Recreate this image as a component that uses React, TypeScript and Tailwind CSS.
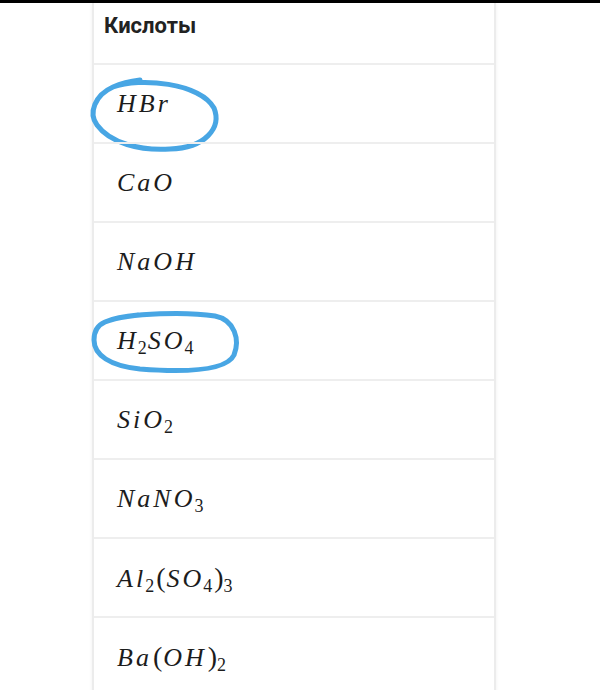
import React from "react";

// each formula: letters in math italic, digits as upright subscripts, parens upright
const formulas = ["HBr", "CaO", "NaOH", "H2SO4", "SiO2", "NaNO3", "Al2(SO4)3", "Ba(OH)2"];

// hand-drawn marks, coordinates local to the row's padding box
const marks: Record<number, string> = {
  0: "M19,22 C46,12 106,18 120,43 C128,63 111,83 76,84 C46,86 16,78 3,60 C-6,48 1,30 19,22 C28,18 38,16 46,15",
  3: "M11,20 C36,10 96,10 121,14 C141,18 146,38 140,53 C132,70 86,70 46,67 C16,64 0,53 0,38 C0,28 4,23 11,20 C20,16 32,14 44,13",
};

function Formula({ text }: { text: string }) {
  return (
    <span className="[font-family:'Liberation_Serif',serif] text-[#1c1c1c] text-[26px] leading-none">
      {text.split("").map((ch, i) => {
        if (/[0-9]/.test(ch)) {
          return (
            <span key={i} className="not-italic text-[18px] relative top-[5px] -ml-[1px] mr-[1px]">
              {ch}
            </span>
          );
        }
        if (ch === "(" || ch === ")") {
          return (
            <span key={i} className="not-italic text-[28px] mx-[1px]">
              {ch}
            </span>
          );
        }
        return (
          <span key={i} className="italic tracking-[3px]">
            {ch}
          </span>
        );
      })}
    </span>
  );
}

export default function App() {
  return (
    <div className="w-[600px] h-[690px] overflow-hidden bg-white">
      <div className="h-[3px] bg-black" />
      <div className="ml-[92px] w-[404px] border-x-2 border-[#ececec] shadow-[0_0_4px_rgba(0,0,0,0.06)]">
        <div className="h-[60px] pl-[10px] pt-[12px]">
          <span className="[font-family:Roboto,sans-serif] font-bold text-[22px] leading-none text-[#222]">
            Кислоты
          </span>
        </div>
        {formulas.map((f, i) => (
          <div key={f} className="relative border-t-2 border-[#eeeeee] h-[79px] flex items-center pl-[23px]">
            <Formula text={f} />
            {marks[i] !== undefined && (
              <svg
                className="absolute left-0 top-0 pointer-events-none overflow-visible"
                width="150"
                height="90"
              >
                <path
                  d={marks[i]}
                  fill="none"
                  stroke="#48a6e4"
                  strokeWidth="5"
                  strokeLinecap="round"
                  strokeLinejoin="round"
                />
              </svg>
            )}
          </div>
        ))}
      </div>
    </div>
  );
}
